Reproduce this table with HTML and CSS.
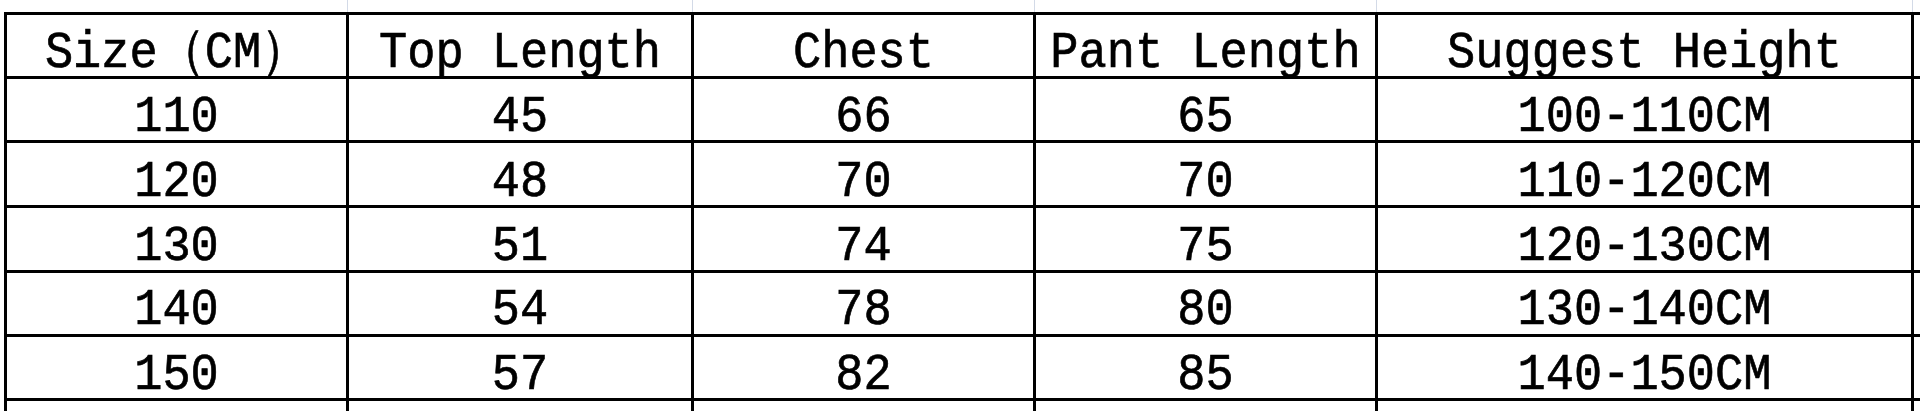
FILE: index.html
```html
<!DOCTYPE html>
<html lang="en">
<head>
<meta charset="utf-8">
<title>Size Chart</title>
<link rel="stylesheet" href="styles.css">
</head>
<body>
<div class="sheet">
  <div class="gridlines">
    <span class="g g1"></span><span class="g g2"></span><span class="g g3"></span><span class="g g4"></span><span class="g g5"></span>
  </div>
  <table class="chart">
    <colgroup>
      <col class="c1"><col class="c2"><col class="c3"><col class="c4"><col class="c5"><col class="c6">
    </colgroup>
    <thead>
      <tr class="r64"><th><span class="t">Size（CM）</span></th><th><span class="t">Top Length</span></th><th><span class="t">Chest</span></th><th><span class="t">Pant Length</span></th><th><span class="t">Suggest Height</span></th><th></th></tr>
    </thead>
    <tbody>
      <tr class="r64"><td><span class="t">110</span></td><td><span class="t">45</span></td><td><span class="t">66</span></td><td><span class="t">65</span></td><td><span class="t">100-110CM</span></td><td></td></tr>
      <tr class="r65"><td><span class="t">120</span></td><td><span class="t">48</span></td><td><span class="t">70</span></td><td><span class="t">70</span></td><td><span class="t">110-120CM</span></td><td></td></tr>
      <tr class="r65"><td><span class="t">130</span></td><td><span class="t">51</span></td><td><span class="t">74</span></td><td><span class="t">75</span></td><td><span class="t">120-130CM</span></td><td></td></tr>
      <tr class="r64"><td><span class="t">140</span></td><td><span class="t">54</span></td><td><span class="t">78</span></td><td><span class="t">80</span></td><td><span class="t">130-140CM</span></td><td></td></tr>
      <tr class="r64"><td><span class="t">150</span></td><td><span class="t">57</span></td><td><span class="t">82</span></td><td><span class="t">85</span></td><td><span class="t">140-150CM</span></td><td></td></tr>
      <tr class="r64"><td></td><td></td><td></td><td></td><td></td><td></td></tr>
    </tbody>
  </table>
</div>
</body>
</html>
```

FILE: styles.css
```css
html, body {
  margin: 0;
  padding: 0;
  background: #ffffff;
  height: 411px;
  overflow: hidden;
}

.sheet {
  width: 1920px;
  height: 411px;
  overflow: hidden;
  padding-left: 4px;
  box-sizing: border-box;
}

.gridlines {
  display: flex;
  height: 12px;
  padding-left: 3px;
}

.g {
  display: block;
  height: 12px;
  box-sizing: border-box;
  border-right: 1px solid #d3dae7;
  flex: none;
}
.g1 { width: 341px; }
.g2 { width: 345px; }
.g3 { width: 342px; }
.g4 { width: 342px; }
.g5 { width: 536px; }

.chart {
  border-collapse: separate;
  border-spacing: 0;
  table-layout: fixed;
  width: 2210px;
  border-top: 3px solid #000;
  border-left: 3px solid #000;
  font-family: "Liberation Mono", "Courier New", monospace;
  font-size: 47px;
  font-weight: normal;
  color: #000;
}

.c1 { width: 342px; }
.c2 { width: 345px; }
.c3 { width: 342px; }
.c4 { width: 342px; }
.c5 { width: 536px; }
.c6 { width: 300px; }

.chart th,
.chart td {
  box-sizing: border-box;
  border-right: 3px solid #000;
  border-bottom: 3px solid #000;
  padding: 0;
  text-align: center;
  vertical-align: middle;
  font-weight: normal;
  line-height: 1;
  white-space: nowrap;
}

.r64 { height: 64px; }
.r65 { height: 65px; }

.t {
  display: inline-block;
  transform: translateY(7px) scaleY(1.12);
  -webkit-text-stroke: 0.6px #000;
}
```
